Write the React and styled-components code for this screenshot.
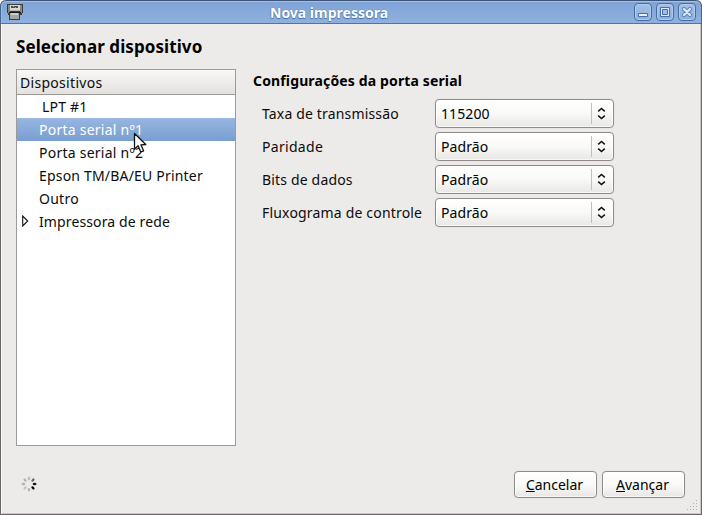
import React from "react";
import styled, { createGlobalStyle, css } from "styled-components";

const GlobalStyle = createGlobalStyle`
  *, *::before, *::after { box-sizing: border-box; }
  html, body { margin: 0; padding: 0; overflow: hidden; background: #fff; }
`;

const Window = styled.div`
  width: 702px;
  height: 515px;
  display: flex;
  flex-direction: column;
  overflow: hidden;
  background: #edebe9;
  border-radius: 6px 6px 0 0;
  border-bottom: 1px solid #6b6867;
  box-shadow: inset 1px 0 #6b6867, inset -1px 0 #6b6867, inset 2px 0 #f7f6f5,
    inset -2px 0 #c9c6c3, inset 0 -1px #c9c6c3;
  color: #0c0c0c;
  font: 14px/20px "Noto Sans", "Open Sans", sans-serif;
  cursor: default;
`;

const Text = styled.span`
  white-space: pre;
  letter-spacing: ${(p) => p.$gap || 0}px;
`;

const TitleBar = styled.header`
  flex: none;
  height: 24px;
  display: flex;
  align-items: center;
  padding: 0 5px 0 6px;
  border: 1px solid #46648f;
  border-top-color: #3c5478;
  border-bottom-color: #4d74ab;
  border-radius: 6px 6px 0 0;
  background: linear-gradient(#7ea3d5, #8fb1de);
  box-shadow: inset 0 1px #a5c0e6, inset 1px 0 #9dbae2;
`;

const Title = styled.h1`
  margin: 2px auto 0 247px;
  color: #fff;
  font-size: 14px;
  line-height: 20px;
  font-weight: 700;
  text-shadow: 0 0 1px #3f669f, 0 1px 1px #4a72ac;
`;

const WindowControls = styled.div`
  display: flex;
  gap: 4px;
`;

const Control = styled.button`
  width: 18px;
  height: 18px;
  padding: 0;
  display: grid;
  place-items: center;
  border: 1px solid #466c9f;
  border-radius: 4px;
  background: linear-gradient(#a3c0e8, #8cafdd);
  box-shadow: inset 0 0 0 1px #b2cbed;
`;

const Body = styled.main`
  flex: 1;
  min-height: 0;
  display: flex;
  flex-direction: column;
  padding: 12px 17px 0 16px;
`;

const PageHeading = styled.h2`
  margin: 0;
  height: 33px;
  color: #000;
  font-size: 17px;
  line-height: 22px;
  font-weight: 700;
`;

const Columns = styled.div`
  height: 377px;
  display: flex;
  gap: 17px;
`;

const DeviceTree = styled.section`
  width: 220px;
  border: 1px solid #9d9a97;
  background: #fff;
`;

const TreeHeader = styled.div`
  height: 25px;
  padding: 3px 0 0 3px;
  border-bottom: 1px solid #9d9a97;
  background: linear-gradient(#f8f8f7, #e3e1df);
`;

const TreeRow = styled.div`
  height: 23px;
  display: flex;
  align-items: center;
  padding-left: ${(p) => p.$indent || 22}px;
  ${(p) =>
    p.$selected &&
    css`
      color: #fff;
      background: linear-gradient(#98b6e1, #789ed0);
    `}
`;

const Expander = styled.svg`
  flex: none;
  margin: -2px 10px 0 0;
`;

const Settings = styled.section`
  width: 361px;
`;

const SettingsTitle = styled.h3`
  margin: 2px 0 8px;
  color: #000;
  font-size: 14px;
  line-height: 20px;
  font-weight: 700;
`;

const FieldGrid = styled.div`
  display: grid;
  grid-template-columns: 173px 179px;
  grid-auto-rows: 29px;
  row-gap: 4px;
  padding-left: 9px;
  align-items: center;
`;

const raised = css`
  border: 1px solid #8f8c89;
  border-radius: 4px;
  background: linear-gradient(#ffffff, #f9f9f8 50%, #e8e7e5);
  box-shadow: inset 0 0 0 1px rgba(255, 255, 255, 0.7), 0 0 1px #c4c1be;
  color: #000;
  font: inherit;
`;

const Select = styled.button`
  ${raised}
  height: 29px;
  padding: 0 7px 0 5px;
  display: flex;
  align-items: center;
  text-align: left;
`;

const SelectValue = styled(Text)`
  flex: 1;
`;

const SelectArrows = styled.span`
  height: 21px;
  width: 15px;
  display: flex;
  align-items: center;
  justify-content: flex-end;
  border-left: 1px solid #c2bfbc;
`;

const Footer = styled.footer`
  flex: 1;
  display: flex;
  align-items: flex-start;
  padding-top: 25px;
`;

const Spinner = styled.svg`
  margin: 5px auto 0 5px;
`;

const ActionButton = styled.button`
  ${raised}
  width: 83px;
  height: 27px;
  margin-left: 5px;
  padding: 0 2px 0 0;
  text-align: center;
`;

const Mnemonic = styled.span`
  text-decoration: underline 1px;
  text-underline-offset: 1px;
  text-decoration-skip-ink: none;
`;

const Grip = styled.svg`
  position: absolute;
  left: 686px;
  top: 499px;
`;

const Pointer = styled.svg`
  position: absolute;
  left: 133px;
  top: 132px;
`;

const devices = [
  { name: "LPT #1", gap: 0.2, indent: 25 },
  { name: "Porta serial nº1", gap: 0.24, selected: true },
  { name: "Porta serial nº2", gap: 0.24 },
  { name: "Epson TM/BA/EU Printer", gap: 0.19 },
  { name: "Outro", gap: 0.25 },
  { name: "Impressora de rede", gap: 0.12, expandable: true, indent: 5 },
];

const fields = [
  { label: "Taxa de transmissão", gap: 0.16, value: "115200" },
  { label: "Paridade", gap: 0.3, value: "Padrão" },
  { label: "Bits de dados", gap: 0.17, value: "Padrão" },
  { label: "Fluxograma de controle", gap: 0.18, value: "Padrão" },
];

const spokes = ["#bdbbb9", "#656463", "#171717", "#000000", "#b5b3b1", "#c4c2c0", "#b3b1af", "#b5b3b1"];

const PrinterIcon = () => (
  <svg width="16" height="16" viewBox="0 0 16 16" shapeRendering="crispEdges">
    <path d="M0 0h16v9h-1v2h-2v5H2v-5H1V9H0z" fill="#3a3c3a" />
    <path d="M1 1h2v8H1zM13 1h2v8h-2z" fill="#858782" />
    <path d="M3 1h10v6H3z" fill="#d8d9d4" />
    <path d="M4 2h7v2H4z" fill="#4a4c4a" />
    <path d="M6 2h1v1H6zM8 3h1v1H8z" fill="#9b9e98" />
    <path d="M3 6h10v1H3z" fill="#b2b4af" />
    <path d="M2 8h12v1H2z" fill="#151515" />
    <path d="M3 9h9v6H3z" fill="#a4a6a1" />
    <path d="M4 9h7v2H4z" fill="#cdcfca" />
  </svg>
);

const controlIcons = {
  Minimizar: <path d="M2.5 8.5h9v3h-9z" fill="#e9f1fc" stroke="#466fa8" />,
  Maximizar: (
    <>
      <path d="M2.5 2.5h9v9h-9z" fill="#dce8f8" stroke="#466fa8" />
      <path d="M4.5 4.5h5v5h-5z" fill="#a0bee6" stroke="#466fa8" />
    </>
  ),
  Fechar: (
    <>
      <path d="M4 4l6 6M10 4l-6 6" stroke="#5a82b9" strokeWidth="4.2" strokeLinecap="round" />
      <path d="M4 4l6 6M10 4l-6 6" stroke="#dce8f8" strokeWidth="2.4" strokeLinecap="round" />
    </>
  ),
};

export default function App() {
  return (
    <>
      <GlobalStyle />
      <Window>
        <TitleBar>
          <PrinterIcon />
          <Title>
            <Text>Nova impressora</Text>
          </Title>
          <WindowControls>
            {Object.entries(controlIcons).map(([name, icon]) => (
              <Control key={name} aria-label={name}>
                <svg width="14" height="14" viewBox="0 0 14 14" fill="none">
                  {icon}
                </svg>
              </Control>
            ))}
          </WindowControls>
        </TitleBar>
        <Body>
          <PageHeading>
            <Text $gap={0.08}>Selecionar dispositivo</Text>
          </PageHeading>
          <Columns>
            <DeviceTree>
              <TreeHeader>
                <Text $gap={0.3}>Dispositivos</Text>
              </TreeHeader>
              {devices.map((d) => (
                <TreeRow key={d.name} $selected={d.selected} $indent={d.indent}>
                  {d.expandable && (
                    <Expander width="7" height="12" viewBox="0 0 7 12">
                      <path d="M.7 1v10l5-5z" fill="#fff" stroke="#111" strokeWidth="1.1" />
                    </Expander>
                  )}
                  <Text $gap={d.gap}>{d.name}</Text>
                </TreeRow>
              ))}
            </DeviceTree>
            <Settings>
              <SettingsTitle>
                <Text $gap={0.14}>Configurações da porta serial</Text>
              </SettingsTitle>
              <FieldGrid>
                {fields.map((f) => (
                  <React.Fragment key={f.label}>
                    <Text $gap={f.gap}>{f.label}</Text>
                    <Select>
                      <SelectValue $gap={0.1}>{f.value}</SelectValue>
                      <SelectArrows>
                        <svg width="9" height="13" viewBox="0 0 9 13" fill="none" stroke="#111" strokeWidth="1.5">
                          <path d="M1.2 4.4L4.5 1.5l3.3 2.9M1.2 8.6l3.3 2.9 3.3-2.9" />
                        </svg>
                      </SelectArrows>
                    </Select>
                  </React.Fragment>
                ))}
              </FieldGrid>
            </Settings>
          </Columns>
          <Footer>
            <Spinner width="16" height="16" viewBox="0 0 16 16">
              {spokes.map((color, i) => (
                <ellipse key={i} cx="8" cy="2.4" rx="1.2" ry="1.9" fill={color} transform={`rotate(${i * 45} 8 8)`} />
              ))}
            </Spinner>
            <ActionButton>
              <Text>
                <Mnemonic>C</Mnemonic>ancelar
              </Text>
            </ActionButton>
            <ActionButton>
              <Text>
                <Mnemonic>A</Mnemonic>vançar
              </Text>
            </ActionButton>
          </Footer>
        </Body>
      </Window>
      <Grip width="12" height="12" viewBox="0 0 12 12" fill="#b3b0ad" shapeRendering="crispEdges">
        {[0, 1, 2, 3].flatMap((r) =>
          [0, 1, 2, 3]
            .filter((c) => c + r >= 3)
            .map((c) => <rect key={`${r}${c}`} x={1 + c * 3} y={1 + r * 3} width="1" height="1" />)
        )}
      </Grip>
      <Pointer width="15" height="22" viewBox="0 0 15 22">
        <path
          d="M1.5 1.5v15.7l3.6-3.4 2.7 6.2 2.8-1.2-2.7-6 4.9-.3z"
          fill="#fff"
          stroke="#111"
          strokeWidth="1.3"
          strokeLinejoin="round"
        />
      </Pointer>
    </>
  );
}
